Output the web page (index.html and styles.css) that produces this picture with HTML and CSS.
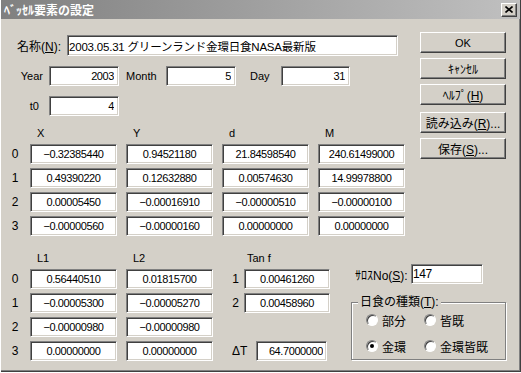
FILE: index.html
```html
<!DOCTYPE html>
<html>
<head>
<meta charset="UTF-8">
<title>ﾍﾞｯｾﾙ要素の設定</title>
<link rel="stylesheet" href="styles.css">
</head>
<body>
<div class="window">
  <div class="titlebar">
    <span class="title">ﾍﾞｯｾﾙ要素の設定</span>
    <span class="close"><svg width="8" height="7" viewBox="0 0 8 7"><path d="M0.5 0.5 L7.5 6.5 M7.5 0.5 L0.5 6.5" stroke="#000" stroke-width="1.6" fill="none"/></svg></span>
  </div>

  <div class="top">
    <div class="main">
      <div class="row name-row">
        <label class="lbl-name cjk">名称(<u>N</u>):</label>
        <input class="field name" value="2003.05.31 グリーンランド金環日食NASA最新版">
      </div>
      <div class="row date-row">
        <span class="lbl-year">Year</span><input class="field num w70" value="2003">
        <span class="lbl-month">Month</span><input class="field num w70" value="5">
        <span class="lbl-day">Day</span><input class="field num w69" value="31">
      </div>
      <div class="row t0-row">
        <span class="lbl-t0">t0</span><input class="field num w70" value="4">
      </div>

      <div class="head">
        <span class="h-cell">X</span><span class="h-cell">Y</span><span class="h-cell">d</span><span class="h-cell">M</span>
      </div>
      <div class="grid-row"><span class="idx">0</span><input class="field cell" value="−0.32385440"><input class="field cell" value="0.94521180"><input class="field cell" value="21.84598540"><input class="field cell" value="240.61499000"></div>
      <div class="grid-row"><span class="idx">1</span><input class="field cell" value="0.49390220"><input class="field cell" value="0.12632880"><input class="field cell" value="0.00574630"><input class="field cell" value="14.99978800"></div>
      <div class="grid-row"><span class="idx">2</span><input class="field cell" value="0.00005450"><input class="field cell" value="−0.00016910"><input class="field cell" value="−0.00000510"><input class="field cell" value="−0.00000100"></div>
      <div class="grid-row"><span class="idx">3</span><input class="field cell" value="−0.00000560"><input class="field cell" value="−0.00000160"><input class="field cell" value="0.00000000"><input class="field cell" value="0.00000000"></div>
    </div>

    <div class="buttons">
      <button class="btn">OK</button>
      <button class="btn cjk">ｷｬﾝｾﾙ</button>
      <button class="btn cjk">ﾍﾙﾌﾟ(<u>H</u>)</button>
      <button class="btn cjk sep">読み込み(<u>R</u>)...</button>
      <button class="btn cjk">保存(<u>S</u>)...</button>
    </div>
  </div>

  <div class="bottom">
    <div class="coef">
      <div class="head">
        <span class="h-cell">L1</span><span class="h-cell">L2</span><span class="h-tan">Tan f</span>
      </div>
      <div class="grid-row"><span class="idx">0</span><input class="field cell" value="0.56440510"><input class="field cell" value="0.01815700"><span class="tan-idx">1</span><input class="field tan" value="0.00461260"></div>
      <div class="grid-row"><span class="idx">1</span><input class="field cell" value="−0.00005300"><input class="field cell" value="−0.00005270"><span class="tan-idx">2</span><input class="field tan" value="0.00458960"></div>
      <div class="grid-row"><span class="idx">2</span><input class="field cell" value="−0.00000980"><input class="field cell" value="−0.00000980"></div>
      <div class="grid-row"><span class="idx">3</span><input class="field cell" value="0.00000000"><input class="field cell" value="0.00000000"><span class="dt-lbl">ΔT</span><input class="field dt" value="64.7000000"></div>
    </div>

    <div class="side">
      <div class="saros">
        <span class="lbl-saros cjk">ｻﾛｽNo(<u>S</u>):</span><input class="field saros-in" value="147">
      </div>
      <div class="group cjk">
        <span class="legend">日食の種類(<u>T</u>):</span>
        <div class="radio-row">
          <span class="opt"><span class="radio"></span>部分</span>
          <span class="opt"><span class="radio"></span>皆既</span>
        </div>
        <div class="radio-row">
          <span class="opt"><span class="radio on"></span>金環</span>
          <span class="opt"><span class="radio"></span>金環皆既</span>
        </div>
      </div>
    </div>
  </div>
</div>
</body>
</html>
```

FILE: styles.css
```css
body {
	margin: 0;
	font-family: "Liberation Sans", "Noto Sans CJK JP", sans-serif;
	font-size: 11px;
	color: #000;
}
.cjk {
	font-size: 12px;
}
u {
	text-decoration: underline;
	text-underline-offset: 1px;
}
.window {
	width: 521px;
	height: 372px;
	box-sizing: border-box;
	background-color: #d4d0c8;
	box-shadow: inset 1px 0 #fff, inset -1px -1px #404040, inset -2px -2px #808080;
}
.titlebar {
	display: flex;
	align-items: center;
	justify-content: space-between;
	height: 19px;
	margin: 0 1px;
	background: linear-gradient(to right, #808080, #c0c0c0);
}
.title {
	padding-left: 3px;
	color: #fff;
	font-weight: bold;
	font-family: "Noto Sans CJK JP", sans-serif;
	font-size: 12px;
}
.close {
	display: flex;
	align-items: center;
	justify-content: center;
	width: 16px;
	height: 14px;
	margin-right: 3px;
	box-sizing: border-box;
	background-color: #d4d0c8;
	border: 1px solid;
	border-color: #fff #404040 #404040 #fff;
	box-shadow: inset -1px -1px #808080;
}

/* inputs */
.field {
	box-sizing: border-box;
	height: 20px;
	margin: 0;
	padding: 0 2px;
	font: inherit;
	font-size: 11px;
	letter-spacing: -0.4px;
	color: #000;
	background-color: #fff;
	border: 1px solid;
	border-color: #808080 #fff #fff #808080;
	box-shadow: inset 1px 1px #404040, inset -1px -1px #d4d0c8;
	outline: none;
}
.num {
	text-align: right;
	padding-right: 4px;
}
.w70 { width: 70px; }
.w69 { width: 69px; }

/* top part */
.top {
	display: flex;
	align-items: flex-start;
}
.main {
	width: 420px;
	padding-top: 16px;
}
.row {
	display: flex;
	align-items: center;
}
.name-row {
	height: 21px;
}
.lbl-name {
	box-sizing: border-box;
	width: 67px;
	padding-left: 17px;
}
.field.name {
	width: 331px;
	height: 21px;
	padding-left: 1px;
	font-size: 11.5px;
	letter-spacing: -0.2px;
}
.date-row,
.t0-row {
	margin-top: 10px;
}
.lbl-year,
.lbl-t0 {
	box-sizing: border-box;
	width: 49px;
	text-align: right;
	padding-right: 6px;
}
.lbl-t0 {
	padding-right: 10px;
}
.lbl-month {
	box-sizing: border-box;
	width: 47px;
	padding-left: 7px;
}
.lbl-day {
	box-sizing: border-box;
	width: 45px;
	padding-left: 14px;
}

.head {
	display: flex;
	height: 14px;
	line-height: 14px;
	margin-top: 10px;
	padding-left: 30px;
}
.h-cell {
	box-sizing: border-box;
	width: 87px;
	padding-left: 7px;
}
.h-cell + .h-cell {
	margin-left: 9px;
}
.grid-row {
	display: flex;
	align-items: center;
	margin-top: 4px;
}
.idx {
	width: 30px;
	text-align: center;
	font-size: 12px;
}
.cell {
	width: 87px;
	text-align: center;
}
.cell + .cell {
	margin-left: 9px;
}

.buttons {
	display: flex;
	flex-direction: column;
	padding-top: 13px;
}
.btn {
	width: 86px;
	height: 21px;
	margin: 0 0 5px 0;
	padding: 0;
	font: inherit;
	color: #000;
	background-color: #d4d0c8;
	border: 1px solid;
	border-color: #fff #404040 #404040 #fff;
	box-shadow: inset -1px -1px #808080;
}
.btn.cjk {
	font-size: 12px;
}
.btn.sep {
	margin-top: 2px;
}

/* bottom part */
.bottom {
	display: flex;
	align-items: flex-start;
}
.coef {
	width: 351px;
}
.coef .head {
	margin-top: 15px;
}
.coef .grid-row:first-of-type {
	margin-top: 2px;
}
.h-tan {
	padding-left: 34px;
}
.tan-idx {
	box-sizing: border-box;
	width: 31px;
	text-align: right;
	padding-right: 5px;
	font-size: 12px;
}
.field.tan {
	width: 86px;
	text-align: center;
}
.dt-lbl {
	box-sizing: border-box;
	width: 43px;
	padding-left: 19px;
	font-size: 12px;
}
.field.dt {
	width: 71px;
	text-align: right;
	padding-right: 3px;
}

.side {
	width: 155px;
	padding-top: 28px;
}
.saros {
	display: flex;
	align-items: center;
}
.lbl-saros {
	box-sizing: border-box;
	width: 60px;
	padding-left: 4px;
	white-space: nowrap;
}
.field.saros-in {
	width: 72px;
	padding-left: 1px;
	font-size: 12px;
}
.group {
	position: relative;
	height: 58px;
	margin-top: 18px;
	box-sizing: border-box;
	border: 1px solid #808080;
	box-shadow: inset 1px 1px #fff, 1px 1px #fff;
	padding: 9px 0 0 14px;
}
.legend {
	position: absolute;
	top: -8px;
	left: 6px;
	padding: 0 2px;
	line-height: 15px;
	background-color: #d4d0c8;
}
.radio-row {
	display: flex;
	height: 16px;
	align-items: center;
}
.radio-row + .radio-row {
	margin-top: 10px;
}
.opt {
	display: flex;
	align-items: center;
	width: 58px;
	white-space: nowrap;
}
.opt + .opt {
	width: auto;
}
.radio {
	position: relative;
	flex: none;
	box-sizing: border-box;
	width: 12px;
	height: 12px;
	margin-right: 4px;
	border-radius: 50%;
	background-color: #fff;
	border: 1px solid;
	border-color: #808080 #fff #fff #808080;
	box-shadow: inset 1px 1px #404040;
}
.radio.on::after {
	content: "";
	position: absolute;
	left: 3px;
	top: 3px;
	width: 4px;
	height: 4px;
	border-radius: 50%;
	background-color: #000;
}
```
